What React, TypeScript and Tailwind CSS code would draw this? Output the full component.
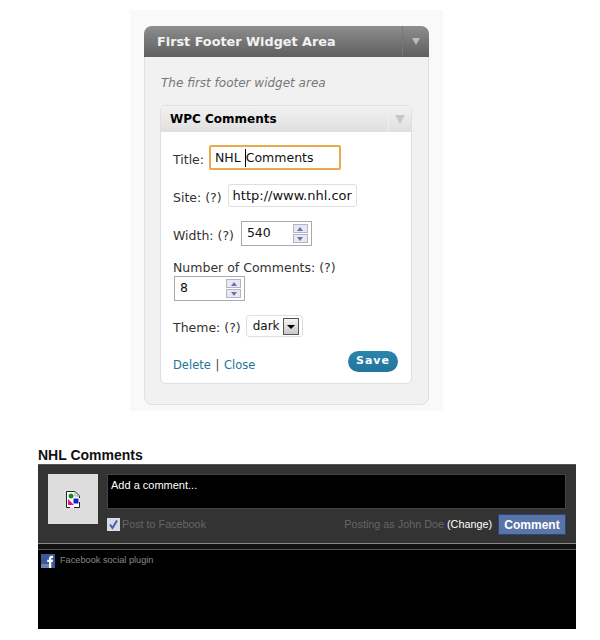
const verdana = "font-['DejaVu_Sans',sans-serif]";

function Spinner({ value }: { value: string }) {
  return (
    <div className="flex h-[25px] w-[71px] items-center justify-between border border-[#aaaaaa] bg-white pl-[5px] pr-[2px] text-[12.5px] text-[#111]">
      <span>{value}</span>
      <div className="mr-[1px] flex w-[15px] flex-col gap-[1px]">
        <div className="flex h-[9px] items-center justify-center border border-[#b4b4c4] bg-[#e8e8f0]">
          <div className="h-0 w-0 border-x-[3px] border-b-[4px] border-x-transparent border-b-[#6a70b0]" />
        </div>
        <div className="flex h-[9px] items-center justify-center border border-[#b4b4c4] bg-[#e8e8f0]">
          <div className="h-0 w-0 border-x-[3px] border-t-[4px] border-x-transparent border-t-[#6a70b0]" />
        </div>
      </div>
    </div>
  );
}

function BrokenImage() {
  return (
    <svg width="16" height="17" viewBox="0 0 16 17">
      <path d="M1.5 .5H10L14.5 5V16.5H1.5z" fill="#fff" />
      <path d="M1.5 .5H10L14.5 5V7M14.5 11V16.5H9M5 16.5H1.5V.5" fill="none" stroke="#222" />
      <path d="M10 .5V5H14.5" fill="none" stroke="#999" />
      <circle cx="6" cy="5" r="2.5" fill="#1a8a2a" />
      <path d="M3 8l6 6H3z" fill="#e0108a" />
      <rect x="8.5" y="7.5" width="5" height="5" fill="#1420d0" />
    </svg>
  );
}

function FacebookLogo() {
  return (
    <svg width="14" height="14" viewBox="0 0 14 14">
      <rect width="14" height="14" fill="#3b5998" />
      <rect y="10" width="8" height="4" fill="#6d84b4" />
      <path d="M8 14V8H6.2V5.8H8V4.3C8 2.5 9 1.7 10.6 1.7H12V3.9H11C10.4 3.9 10.3 4.2 10.3 4.7V5.8H12L11.7 8H10.3V14z" fill="#fff" />
    </svg>
  );
}

export default function App() {
  return (
    <div className="h-[640px] w-[600px] overflow-hidden bg-white pt-[10px]">
      <div className={`ml-[130px] h-[401px] w-[313px] bg-[#f9f9f9] px-[14px] pt-[16px] ${verdana}`}>
        <div className="h-[379px] rounded-[8px] border border-[#dfdfdf] bg-[#f1f1f1]">
          <div className="-mx-[1px] -mt-[1px] flex h-[31px] items-center justify-between rounded-t-[8px] bg-gradient-to-b from-[#8e8e8e] to-[#5f5f5f] pl-[13px]">
            <span className="text-[12.8px] font-bold text-[#f2f2f2]">First Footer Widget Area</span>
            <div className="flex h-full w-[27px] items-center justify-center border-l border-[#777]">
              <div className="h-0 w-0 border-x-[4px] border-t-[7px] border-x-transparent border-t-[#bbbbbb]" />
            </div>
          </div>
          <p className="mt-[17px] pl-[16px] text-[12px] leading-[18px] italic text-[#777]">The first footer widget area</p>
          <div className="ml-[15px] mr-[16px] mt-[13px] h-[279px] rounded-[6px] border border-[#dfdfdf] bg-white">
            <div className="flex h-[26px] items-center justify-between rounded-t-[6px] bg-gradient-to-b from-[#f2f2f2] to-[#dfdfdf] pl-[9px]">
              <span className="text-[12px] font-bold text-black">WPC Comments</span>
              <div className="flex h-full w-[23px] items-center justify-center border-l border-[#eeeeee]">
                <div className="h-0 w-0 border-x-[5px] border-t-[9px] border-x-transparent border-t-[#c8c8c8]" />
              </div>
            </div>
            <div className="pl-[12px] pr-[13px] pt-[13px] text-[12.5px] text-[#333]">
              <div className="flex h-[25px] items-center gap-[5px]">
                <span className="pt-[5px]">Title:</span>
                <div className="flex h-[25px] w-[132px] items-center rounded-[2px] border-2 border-[#e8aa4c] pl-[4px] pt-[1px] text-[#111]">
                  NHL <span className="ml-[4px] border-l border-black">Comments</span>
                </div>
              </div>
              <div className="mt-[14px] flex h-[23px] items-center gap-[6px]">
                <span className="pt-[5px]">Site: <span>(?)</span></span>
                <div className="flex h-[23px] w-[129px] items-center overflow-hidden rounded-[3px] border border-[#dfdfdf] pl-[4px] text-[13px] whitespace-nowrap text-[#111]">
                  http://www.nhl.cor
                </div>
              </div>
              <div className="mt-[14px] flex items-center gap-[7px]">
                <span className="pt-[5px]">Width: <span>(?)</span></span>
                <Spinner value="540" />
              </div>
              <p className="mt-[13px] leading-[17px]">Number of Comments: (?)</p>
              <div className="ml-[1px]">
                <Spinner value="8" />
              </div>
              <div className="mt-[14px] flex h-[22px] items-center gap-[5px]">
                <span className="pt-[5px]">Theme: <span>(?)</span></span>
                <div className="flex h-[22px] w-[57px] items-center justify-between rounded-[3px] border border-[#dfdfdf] pl-[6px] pr-[3px] text-[12px] text-[#111]">
                  <span>dark</span>
                  <div className="flex h-[17px] w-[16px] items-center justify-center border border-[#555] bg-gradient-to-b from-[#f4f4f4] to-[#c8c8c8]">
                    <div className="mt-[2px] h-0 w-0 border-x-[4px] border-t-[4px] border-x-transparent border-t-black" />
                  </div>
                </div>
              </div>
              <div className="mt-[12px] flex items-center justify-between">
                <div className="pt-[8px] text-[11.5px] text-[#444]">
                  <span className="text-[#21759b]">Delete</span> <span className="mx-[1px]">|</span> <span className="text-[#21759b]">Close</span>
                </div>
                <div className="flex h-[21px] w-[50px] items-center justify-center rounded-full bg-gradient-to-b from-[#2a85ad] to-[#21759b] text-[11px] font-bold tracking-[1px] text-white">
                  Save
                </div>
              </div>
            </div>
          </div>
        </div>
      </div>

      <div className="ml-[38px] mt-[35px] w-[538px] font-['Liberation_Sans',sans-serif]">
        <h2 className="text-[14px] leading-[18px] font-bold text-[#111]">NHL Comments</h2>
        <div className="h-[79px] border-t border-[#555] bg-[#333333] px-[10px] pt-[9px]">
          <div className="flex gap-[9px]">
            <div className="flex h-[50px] w-[50px] shrink-0 items-center justify-center bg-[#dddddd]">
              <BrokenImage />
            </div>
            <div className="flex-1">
              <div className="h-[35px] border border-[#444] bg-black px-[3px] py-[2px] text-[11px] leading-[16px] text-white">
                Add a comment...
              </div>
              <div className="mt-[5px] flex h-[21px] items-center justify-between text-[10.8px] text-[#666]">
                <div className="flex items-center gap-[2px]">
                  <div className="flex h-[13px] w-[13px] items-center justify-center border border-[#ddd] bg-[#d4daea]">
                    <svg width="11" height="11" viewBox="0 0 11 11">
                      <path d="M2 5.5L4.5 9L9 1.5" fill="none" stroke="#4a5ea0" strokeWidth="2" />
                    </svg>
                  </div>
                  <span>Post to Facebook</span>
                </div>
                <div className="flex items-center gap-[6px]">
                  <span>
                    Posting as John Doe <span className="text-white">(Change)</span>
                  </span>
                  <div className="flex h-[21px] w-[68px] items-center justify-center border border-[#29447e] bg-[#5b74a8] text-[12px] font-bold text-white">
                    Comment
                  </div>
                </div>
              </div>
            </div>
          </div>
        </div>
        <div className="h-[86px] border-t border-[#888] bg-black">
          <div className="h-[6px] border-b border-[#555] bg-[#111]" />
          <div className="flex items-center gap-[5px] pl-[3px] pt-[4px] text-[9.2px] text-[#888]">
            <FacebookLogo />
            <span>Facebook social plugin</span>
          </div>
        </div>
      </div>
    </div>
  );
}
